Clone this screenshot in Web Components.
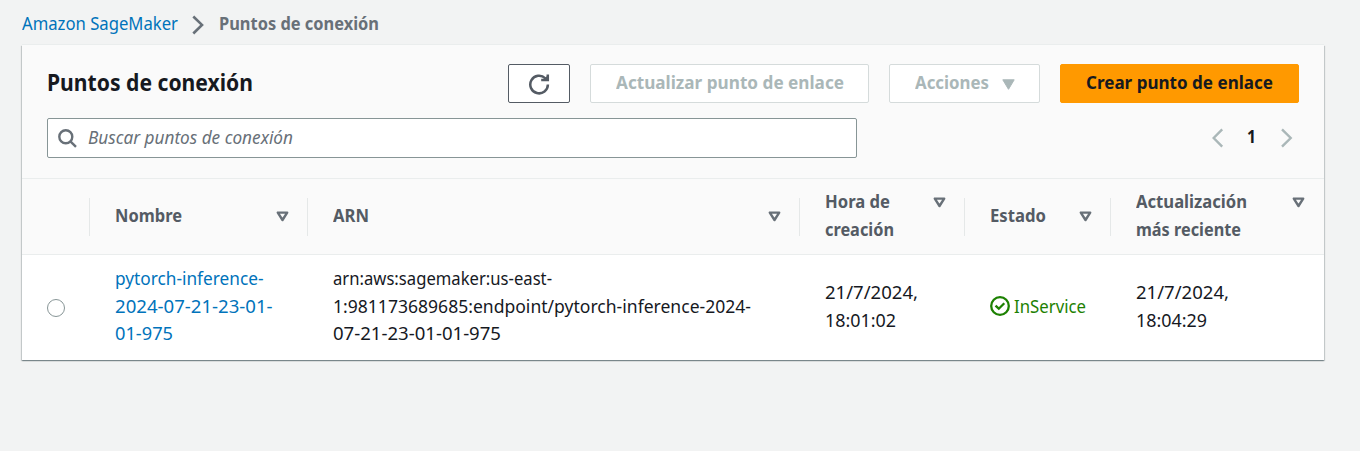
<!DOCTYPE html>
<html lang="es">
<head>
<meta charset="utf-8">
<title>Puntos de conexión</title>
<style>
html,body{margin:0;height:100%;background:#f2f3f3;overflow:hidden}
body{font:17.5px/28px "Noto Sans","Open Sans",sans-serif;color:#16191f}
</style>
</head>
<body>
<endpoints-page></endpoints-page>
<script>
const define=(name,html,ready)=>customElements.define(name,class extends HTMLElement{
  constructor(){super();this.attachShadow({mode:'open'}).innerHTML=html;}
  connectedCallback(){if(ready)ready(this);}
});

/* One line of text, condensed or expanded to the width given in `w`. */
define('fit-text',`<style>
:host{display:block;white-space:nowrap;line-height:inherit}
span{display:inline-block;transform-origin:0 50%;vertical-align:top}
</style><span><slot></slot></span>`,el=>{
  const s=el.shadowRoot.querySelector('span'),w=+el.getAttribute('w');
  el.style.width=w+'px';
  s.style.transform='scaleX('+w/s.getBoundingClientRect().width+')';
});

define('ui-button',`<style>
:host{display:flex;box-sizing:border-box;height:39px;border:1px solid #d5dbdb;border-radius:2px;background:#fff;color:#aab7b8;font-weight:700;align-items:center;justify-content:center;line-height:34px;padding-bottom:1px}
:host([kind=primary]){background:#ff9900;border-color:#ff9900;color:#16191f}
:host([kind=icon]){border-color:#545b64;color:#545b64;width:62px;padding:0}
::slotted(fit-text){margin-bottom:2px}
</style><slot></slot>`);

define('sort-icon',`<style>:host{display:block;width:13px;height:11px;flex:none}svg{display:block}</style>
<svg width="13" height="11" viewBox="0 0 13 11"><path d="M1.8 1.6h9.4L6.5 9z" fill="none" stroke="#687078" stroke-width="2.4" stroke-linejoin="round"/></svg>`);

define('head-cell',`<style>
:host{display:flex;align-items:center;height:75px;padding:0 18px 3px 26px;box-sizing:border-box;font-weight:700;color:#545b64;
background:linear-gradient(#e5e8e8,#e5e8e8) left 19px/1px 38px no-repeat}
:host([last]){padding-right:19px}
.in{display:flex;flex:1;justify-content:space-between;align-items:flex-start}
sort-icon{margin-top:10px}
</style><div class="in"><div><slot></slot></div><sort-icon></sort-icon></div>`);

define('body-cell',`<style>:host{display:flex;flex-direction:column;justify-content:center;height:105px;padding:0 0 2px 26px;box-sizing:border-box;line-height:27.6px}
:host([link]){color:#0073bb;padding-left:25.5px}</style><slot></slot>`);

define('status-ok',`<style>:host{display:flex;align-items:center;gap:4px;color:#1d8102}svg{display:block;margin-top:-1px}</style>
<svg width="20" height="20" viewBox="0 0 20 20" fill="none" stroke="#1d8102" stroke-width="2.3"><circle cx="10" cy="10" r="8.8"/><path d="M5.5 9.6l3.3 3.1 5.5-5.4"/></svg><slot></slot>`);

define('bread-crumb',`<style>:host{display:flex;height:45px;padding:9px 0 0 22px;box-sizing:border-box;align-items:flex-start}
.a{color:#0073bb}.b{color:#687078;font-weight:700}svg{margin:6px 15px 0 14px;display:block}</style>
<fit-text class="a" w="156">Amazon SageMaker</fit-text>
<svg width="12" height="20" viewBox="0 0 12 20"><path d="M1.3 1.5l8.7 8.4-8.7 8.6" fill="none" stroke="#687078" stroke-width="2.6"/></svg>
<fit-text class="b" w="160">Puntos de conexión</fit-text>`);

define('page-nav',`<style>:host{display:flex;align-items:center;font-weight:700;padding-right:6px;height:40px}
svg{display:block}fit-text{margin:0 25px 4px 23px}</style>
<svg width="12" height="20" viewBox="0 0 12 20"><path d="M10.2 1.3L1.7 10l8.5 8.7" fill="none" stroke="#aab7b8" stroke-width="2.4"/></svg>
<fit-text w="9">1</fit-text>
<svg width="12" height="20" viewBox="0 0 12 20"><path d="M1 1.3L9.7 10 1 18.7" fill="none" stroke="#aab7b8" stroke-width="2.4"/></svg>`);

define('search-field',`<style>:host{display:flex;align-items:center;box-sizing:border-box;width:810px;height:40px;border:1px solid #879596;border-radius:2px;background:#fff;color:#687078;font-style:italic;padding:0 0 0 10px;gap:11px}svg{display:block}fit-text{margin-top:-3px}</style>
<svg width="19" height="19" viewBox="0 0 19 19" fill="none" stroke="#687078" stroke-width="2.4"><circle cx="7.8" cy="7.8" r="6.5"/><path d="M12.4 12.4l5.6 5.5"/></svg>
<fit-text w="205">Buscar puntos de conexión</fit-text>`);

define('endpoints-table',`<style>
:host{display:block}
.row{display:grid;grid-template-columns:67px 218px 492px 165px 146px 214px}
.head{background:#fafafa;border-top:1px solid #eaeded;border-bottom:1px solid #eaeded}
.pick{display:flex;align-items:center;padding-left:25px}
.pick i{width:16px;height:16px;border:1px solid #879596;border-radius:50%;background:#fff}
</style>
<div class="row head"><span></span>
<head-cell><fit-text w="67">Nombre</fit-text></head-cell>
<head-cell><fit-text w="36">ARN</fit-text></head-cell>
<head-cell><fit-text w="65">Hora de</fit-text><fit-text w="69">creación</fit-text></head-cell>
<head-cell><fit-text w="56">Estado</fit-text></head-cell>
<head-cell last><fit-text w="111">Actualización</fit-text><fit-text w="105">más reciente</fit-text></head-cell></div>
<div class="row"><span class="pick"><i></i></span>
<body-cell link><fit-text w="148.5">pytorch-inference-</fit-text><fit-text w="157.5">2024-07-21-23-01-</fit-text><fit-text w="58">01-975</fit-text></body-cell>
<body-cell><fit-text w="219">arn:aws:sagemaker:us-east-</fit-text><fit-text w="418">1:981173689685:endpoint/pytorch-inference-2024-</fit-text><fit-text w="168">07-21-23-01-01-975</fit-text></body-cell>
<body-cell><fit-text w="93">21/7/2024,</fit-text><fit-text w="71">18:01:02</fit-text></body-cell>
<body-cell><status-ok><fit-text w="72">InService</fit-text></status-ok></body-cell>
<body-cell><fit-text w="93">21/7/2024,</fit-text><fit-text w="71">18:04:29</fit-text></body-cell></div>`);

define('endpoints-card',`<style>
:host{display:block;width:1302px;height:315px;margin-left:22px;background:#fff;box-shadow:0 1px 1px 0 rgba(0,28,36,.3),1px 1px 1px 0 rgba(0,28,36,.15),-1px 1px 1px 0 rgba(0,28,36,.15),0 -1px 0 #eaeded}
.top{height:133px;background:#fafafa;padding:19px 25px 0;box-sizing:border-box}
.bar{display:flex;gap:20px;align-items:flex-start}
.title{font-size:22.5px;font-weight:700;line-height:37px;margin-right:auto}
.find{display:flex;justify-content:space-between;margin-top:15px}
svg{display:block}.upd{width:279px}.act{width:151px;gap:13px}.act svg{margin-top:2px}.new{width:239px}
</style>
<div class="top"><div class="bar"><fit-text class="title" w="206">Puntos de conexión</fit-text>
<ui-button kind="icon"><svg width="22" height="22" viewBox="0 0 22 22" fill="none" stroke="#545b64" stroke-width="2.5"><path d="M19.9 11.5A8.8 8.8 0 1 1 17.3 5.3L18.4 6.5"/><path d="M13.2 7h6.6V1.4"/><path d="M15 7l4.8-4.8V7z" fill="#545b64" stroke="none"/></svg></ui-button>
<ui-button class="upd"><fit-text w="228">Actualizar punto de enlace</fit-text></ui-button>
<ui-button class="act"><fit-text w="74">Acciones</fit-text><svg width="13" height="11" viewBox="0 0 13 11"><path d="M.8.8h11.4L6.5 10.3z" fill="#aab7b8" stroke="#aab7b8" stroke-linejoin="round"/></svg></ui-button>
<ui-button kind="primary" class="new"><fit-text w="187">Crear punto de enlace</fit-text></ui-button></div>
<div class="find"><search-field></search-field><page-nav></page-nav></div></div>
<endpoints-table></endpoints-table>`);

define('endpoints-page',`<style>:host{display:block}</style><bread-crumb></bread-crumb><endpoints-card></endpoints-card>`);
</script>
</body>
</html>
